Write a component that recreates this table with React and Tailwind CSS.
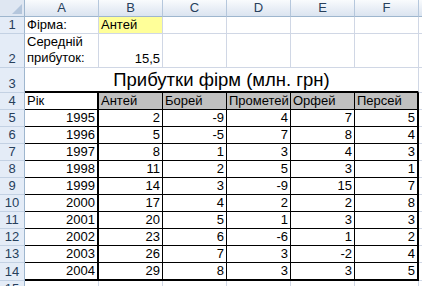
import React from "react";

const grid = "border-[#d0d7e5]";

const years = [1995, 1996, 1997, 1998, 1999, 2000, 2001, 2002, 2003, 2004];
const firms = ["Антей", "Борей", "Прометей", "Орфей", "Персей"];
const profits = [
  [2, -9, 4, 7, 5],
  [5, -5, 7, 8, 4],
  [8, 1, 3, 4, 3],
  [11, 2, 5, 3, 1],
  [14, 3, -9, 15, 7],
  [17, 4, 2, 2, 8],
  [20, 5, 1, 3, 3],
  [23, 6, -6, 1, 2],
  [26, 7, 3, -2, 4],
  [29, 8, 3, 3, 5],
];

function RowHead({ n, h = "h-[17px]" }) {
  return (
    <div
      className={`${h} w-[25px] shrink-0 flex items-end justify-center bg-[#e4ecf7] border-r border-r-[#9eb6ce] border-b border-b-[#c3d1e3] text-[13px] leading-[15px] text-[#27405c] pb-[1px]`}
    >
      {n}
    </div>
  );
}

function ColHead({ label, w }) {
  return (
    <div
      className={`${w} h-[17px] shrink-0 flex items-center justify-center bg-gradient-to-b from-[#f9fbfd] to-[#dbe4f0] border-r border-r-[#b5c7dc] border-b border-b-[#9eb6ce] text-[13px] text-[#27405c]`}
    >
      {label}
    </div>
  );
}

function Cell({ w, className = "", children }) {
  return (
    <div
      className={`${w} h-full shrink-0 flex items-end px-[2px] pb-[1px] text-[13px] leading-[15px] text-black overflow-visible whitespace-nowrap ${className}`}
    >
      {children}
    </div>
  );
}

export default function App() {
  return (
    <div
      className="w-[422px] h-[286px] overflow-hidden bg-white"
      style={{ fontFamily: '"Liberation Sans", Arial, sans-serif' }}
    >
      {/* column letters */}
      <div className="flex">
        <div className="w-[25px] h-[17px] shrink-0 bg-[#dfe7f2] border-r border-r-[#9eb6ce] border-b border-b-[#9eb6ce] flex items-end justify-end pr-[2px] pb-[2px]">
          <svg width="10" height="10" viewBox="0 0 10 10">
            <polygon points="10,0 10,10 0,10" fill="#b4c6dc" />
          </svg>
        </div>
        <ColHead label="A" w="w-[74px]" />
        <ColHead label="B" w="w-[64px]" />
        <ColHead label="C" w="w-[64px]" />
        <ColHead label="D" w="w-[64px]" />
        <ColHead label="E" w="w-[64px]" />
        <ColHead label="F" w="w-[64px]" />
        <ColHead label="" w="w-[40px]" />
      </div>

      {/* row 1 */}
      <div className="flex h-[17px]">
        <RowHead n="1" />
        <Cell w="w-[74px]" className={`border-r border-b ${grid}`}>Фірма:</Cell>
        <Cell w="w-[64px]" className={`bg-[#ffff99] border-r border-b ${grid}`}>Антей</Cell>
        <Cell w="w-[64px]" className={`border-r border-b ${grid}`} />
        <Cell w="w-[64px]" className={`border-r border-b ${grid}`} />
        <Cell w="w-[64px]" className={`border-r border-b ${grid}`} />
        <Cell w="w-[64px]" className={`border-r border-b ${grid}`} />
        <Cell w="w-[40px]" className={`border-b ${grid}`} />
      </div>

      {/* row 2: wrapped label */}
      <div className="flex h-[34px]">
        <RowHead n="2" h="h-[34px]" />
        <Cell w="w-[74px]" className={`border-r border-b ${grid} whitespace-normal leading-[16px]`}>
          <span>
            Середній
            <br />
            прибуток:
          </span>
        </Cell>
        <Cell w="w-[64px]" className={`justify-end border-r border-b ${grid}`}>15,5</Cell>
        <Cell w="w-[64px]" className={`border-r border-b ${grid}`} />
        <Cell w="w-[64px]" className={`border-r border-b ${grid}`} />
        <Cell w="w-[64px]" className={`border-r border-b ${grid}`} />
        <Cell w="w-[64px]" className={`border-r border-b ${grid}`} />
        <Cell w="w-[40px]" className={`border-b ${grid}`} />
      </div>

      {/* row 3: title centred across A:F */}
      <div className="flex h-[25px]">
        <RowHead n="3" h="h-[25px]" />
        <div className={`w-[394px] h-full shrink-0 flex items-end justify-center border-r ${grid} border-b-2 border-b-black text-[18.5px] leading-[21px] text-black pb-[1px]`}>
          Прибутки фірм (млн. грн)
        </div>
        <Cell w="w-[40px]" className={`border-b ${grid}`} />
      </div>

      {/* row 4: header */}
      <div className="flex h-[17px]">
        <RowHead n="4" />
        <Cell w="w-[74px]" className="border-r-2 border-r-black border-b border-b-black">Рік</Cell>
        {firms.map((f, i) => (
          <Cell
            key={f}
            w="w-[64px]"
            className={`bg-[#c0c0c0] border-b border-b-black ${i === 4 ? "border-r-2 border-r-black" : "border-r border-r-black"}`}
          >
            {f}
          </Cell>
        ))}
        <Cell w="w-[40px]" className={`border-b ${grid}`} />
      </div>

      {/* rows 5-14: data, last row carries the thick bottom edge */}
      {years.map((y, r) => {
        const last = r === years.length - 1;
        const bottom = last ? "border-b-2 border-b-black" : "border-b border-b-black";
        return (
          <div key={y} className={`flex ${last ? "h-[18px]" : "h-[17px]"}`}>
            <RowHead n={r + 5} h={last ? "h-[18px]" : "h-[17px]"} />
            <Cell w="w-[74px]" className={`justify-end border-r-2 border-r-black ${bottom}`}>
              {y}
            </Cell>
            {profits[r].map((v, i) => (
              <Cell
                key={i}
                w="w-[64px]"
                className={`justify-end ${bottom} ${i === 4 ? "border-r-2 border-r-black" : "border-r border-r-black"}`}
              >
                {v}
              </Cell>
            ))}
            <Cell w="w-[40px]" className={`border-b ${grid}`} />
          </div>
        );
      })}

      {/* row 15 */}
      <div className="flex h-[17px]">
        <RowHead n="15" />
        <Cell w="w-[74px]" className={`border-r border-b ${grid}`} />
        <Cell w="w-[64px]" className={`border-r border-b ${grid}`} />
        <Cell w="w-[64px]" className={`border-r border-b ${grid}`} />
        <Cell w="w-[64px]" className={`border-r border-b ${grid}`} />
        <Cell w="w-[64px]" className={`border-r border-b ${grid}`} />
        <Cell w="w-[64px]" className={`border-r border-b ${grid}`} />
      </div>
    </div>
  );
}
